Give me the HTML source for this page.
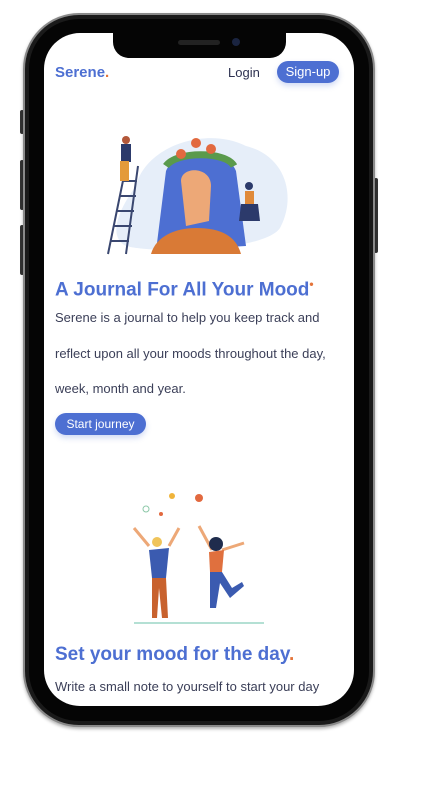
<!DOCTYPE html>
<html><head><meta charset="utf-8"><style>
*{margin:0;padding:0;box-sizing:border-box}
body{width:446px;height:786px;background:#fff;position:relative;overflow:hidden;font-family:"Liberation Sans",sans-serif}
.outer{position:absolute;left:23px;top:13px;width:352px;height:714px;border-radius:56px;background:#1a1a1a;border:2px solid #8a8a8a;box-shadow:0 2px 3px rgba(0,0,0,.3)}
.inner{position:absolute;left:29px;top:19px;width:340px;height:702px;border-radius:50px;background:#050505}
.screen{position:absolute;left:44px;top:33px;width:310px;height:673px;border-radius:36px;background:#fff;overflow:hidden}
.notch{position:absolute;left:69px;top:0;width:173px;height:25px;background:#050505;border-radius:0 0 16px 16px}
.spk{position:absolute;left:65px;top:7px;width:42px;height:5px;border-radius:3px;background:#222}
.cam{position:absolute;left:119px;top:5px;width:8px;height:8px;border-radius:50%;background:#1a2440}
.btn-side{position:absolute;background:#333;border-radius:2px;width:4px}
.t{position:absolute;white-space:nowrap}
.blue{color:#4d6fd2}
.dot{color:#e4743a}
.p{color:#3b3f58;font-size:13px}
</style></head><body>
<div class="btn-side" style="left:20px;top:110px;height:24px"></div>
<div class="btn-side" style="left:20px;top:160px;height:50px"></div>
<div class="btn-side" style="left:20px;top:225px;height:50px"></div>
<div class="btn-side" style="left:374px;top:178px;height:75px"></div>
<div class="outer"></div>
<div class="inner"></div>
<div class="screen">
 <div class="notch"><div class="spk"></div><div class="cam"></div></div>
 <div class="t blue" style="left:11px;top:31px;font-size:15px;font-weight:bold">Serene<span class="dot">.</span></div>
 <div class="t" style="left:184px;top:32px;font-size:13px;color:#2d3150">Login</div>
 <div class="t" style="left:233px;top:28px;width:62px;height:22px;border-radius:11px;background:#4d6fd2;color:#fff;font-size:13px;text-align:center;line-height:22px;box-shadow:0 3px 6px rgba(77,111,210,.25)">Sign-up</div>
 <svg style="position:absolute;left:52px;top:93px" width="210" height="130" viewBox="0 0 210 130">
  <path d="M40 60 C50 20 110 0 150 20 C190 30 200 70 185 100 C175 125 60 128 30 120 C10 110 25 80 40 60Z" fill="#e6eef9"/>
  <path d="M70 45 C80 20 130 20 140 45 L150 120 L60 125Z" fill="#4d6fd2"/>
  <path d="M85 55 C85 40 115 40 115 60 L113 95 L90 100Z" fill="#eda877"/>
  <path d="M55 128 C60 110 80 102 100 102 C125 102 140 110 145 128Z" fill="#d97a36"/>
  <path d="M70 40 C80 25 130 25 138 40" stroke="#5a9a4c" stroke-width="7" fill="none"/>
  <circle cx="85" cy="28" r="5" fill="#e2693f"/><circle cx="115" cy="23" r="5" fill="#e2693f"/><circle cx="100" cy="17" r="5" fill="#e2693f"/>
  <path d="M12 128 L30 40 M30 128 L42 40 M15 115 L33 115 M18 100 L36 100 M21 85 L38 85 M24 70 L40 70 M27 55 L41 55" stroke="#3a4770" stroke-width="2"/>
  <rect x="25" y="18" width="10" height="18" fill="#2c3a6b"/><rect x="24" y="35" width="9" height="20" fill="#e49a3a"/><circle cx="30" cy="14" r="4" fill="#b3583a"/>
  <rect x="149" y="65" width="9" height="14" fill="#e08a3a"/><path d="M145 78 L162 78 L164 95 L143 95Z" fill="#2c3a6b"/><circle cx="153" cy="60" r="4" fill="#2c3a6b"/>
 </svg>
 <div class="t blue" style="left:11px;top:244px;font-size:19px;font-weight:bold">A Journal For All Your Mood<sup class="dot" style="font-size:12px">•</sup></div>
 <div class="t p" style="left:11px;top:277px">Serene is a journal to help you keep track and</div>
 <div class="t p" style="left:11px;top:313px">reflect upon all your moods throughout the day,</div>
 <div class="t p" style="left:11px;top:348px">week, month and year.</div>
 <div class="t" style="left:11px;top:380px;width:91px;height:22px;border-radius:11px;background:#4d6fd2;color:#fff;font-size:12px;text-align:center;line-height:22px;box-shadow:0 3px 6px rgba(77,111,210,.25)">Start journey</div>
 <svg style="position:absolute;left:80px;top:455px" width="150" height="140" viewBox="0 0 150 140">
  <circle cx="48" cy="8" r="3" fill="#f0b43a"/><circle cx="75" cy="10" r="4" fill="#e2693f"/><circle cx="22" cy="21" r="3" fill="none" stroke="#8cc8a8"/><circle cx="37" cy="26" r="2" fill="#e2693f"/>
  <path d="M10 40 L25 58 M55 40 L45 58" stroke="#eda877" stroke-width="3"/>
  <circle cx="33" cy="54" r="5" fill="#f0c45a"/>
  <path d="M25 62 L45 60 L42 90 L28 90Z" fill="#3b5bb0"/>
  <path d="M28 90 L42 90 L44 130 L38 130 L35 100 L33 130 L28 130Z" fill="#c8622e"/>
  <path d="M75 38 L88 62 M120 55 L98 62" stroke="#eda877" stroke-width="3"/>
  <circle cx="92" cy="56" r="7" fill="#1f2c4d"/>
  <path d="M85 64 L100 62 L98 84 L86 84Z" fill="#e0703e"/>
  <path d="M86 84 L98 84 L108 100 L118 94 L120 98 L106 110 L96 95 L92 120 L86 120Z" fill="#3b5bb0"/>
  <line x1="10" y1="135" x2="140" y2="135" stroke="#b4e0d4" stroke-width="2"/>
 </svg>
 <div class="t blue" style="left:11px;top:611px;font-size:19px;font-weight:bold">Set your mood for the day<span class="dot">.</span></div>
 <div class="t p" style="left:11px;top:646px">Write a small note to yourself to start your day</div>
</div>
</body></html>
